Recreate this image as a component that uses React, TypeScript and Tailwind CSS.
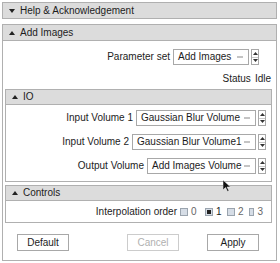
import React from "react";

const Arrow = ({ up }: { up?: boolean }) => (
  <svg width="6" height="4" viewBox="0 0 6 4" className="shrink-0">
    {up ? <path d="M0 4 L3 0 L6 4 Z" fill="#222" /> : <path d="M0 0 L6 0 L3 4 Z" fill="#222" />}
  </svg>
);

const Spinner = () => (
  <div className="flex flex-col w-[8px] h-[16px] border border-[#a8a8a8] bg-white ml-[2px]">
    <div className="flex-1 flex items-center justify-center border-b border-[#c8c8c8]">
      <svg width="5" height="3" viewBox="0 0 5 3">
        <path d="M0 3 L2.5 0 L5 3 Z" fill="#333" />
      </svg>
    </div>
    <div className="flex-1 flex items-center justify-center">
      <svg width="5" height="3" viewBox="0 0 5 3">
        <path d="M0 0 L5 0 L2.5 3 Z" fill="#333" />
      </svg>
    </div>
  </div>
);

const Combo = ({ text, width }: { text: string; width: string }) => (
  <div className="flex items-center">
    <div className={`${width} h-[16px] border border-[#a8a8a8] bg-white flex items-center pl-[4px] pr-[5px]`}>
      <span className="flex-1 whitespace-nowrap">{text}</span>
      <span className="w-[6px] h-[2px] bg-[#c4c4c4]" />
    </div>
    <Spinner />
  </div>
);

const Header = ({ title, up, h }: { title: string; up?: boolean; h: string }) => (
  <div className={`flex items-center ${h} bg-[#dcdcdc] pl-[6px] gap-[5px]`}>
    <Arrow up={up} />
    <span>{title}</span>
  </div>
);

const Check = ({ label, on, w }: { label: string; on?: boolean; w: string }) => (
  <div className={`flex items-center gap-[3px] ${w}`}>
    <div className="w-[8px] h-[8px] border border-[#9aa4ae] bg-[#d6dde6] flex items-center justify-center">
      {on && <div className="w-[4px] h-[4px] bg-[#222]" />}
    </div>
    <span className={on ? "" : "text-[#666]"}>{label}</span>
  </div>
);

export default function App() {
  return (
    <div
      className="relative w-[280px] h-[263px] bg-white text-[10px] leading-none text-[#1c1c1c] pt-[2px] pl-[2px] pr-[3px] pb-[2px] flex flex-col"
      style={{ fontFamily: '"Liberation Sans", Arial, sans-serif' }}
    >
      <div className="border border-[#b0b0b0]">
        <Header title="Help & Acknowledgement" h="h-[15px]" />
      </div>

      <div className="mt-[5px] border border-[#b0b0b0] flex-1 flex flex-col">
        <div className="border-b border-[#b0b0b0]">
          <Header title="Add Images" up h="h-[15px]" />
        </div>

        <div className="flex flex-col pl-[2px] pr-[4px]">
          <div className="flex items-center justify-end gap-[3px] mt-[8px] pr-[13px]">
            <span>Parameter set</span>
            <Combo text="Add Images" width="w-[76px]" />
          </div>
          <div className="flex justify-end gap-[4px] mt-[9px] pr-[1px]">
            <span>Status</span>
            <span>Idle</span>
          </div>

          <div className="mt-[5px] border border-[#b0b0b0] flex flex-col pb-[7px]">
            <div className="border-b border-[#b0b0b0]">
              <Header title="IO" up h="h-[14px]" />
            </div>
            <div className="flex flex-col gap-[8px] pt-[5px] pr-[5px]">
              <div className="flex items-center justify-end gap-[3px]">
                <span>Input Volume 1</span>
                <Combo text="Gaussian Blur Volume" width="w-[120px]" />
              </div>
              <div className="flex items-center justify-end gap-[3px]">
                <span>Input Volume 2</span>
                <Combo text="Gaussian Blur Volume1" width="w-[124px]" />
              </div>
              <div className="flex items-center justify-end gap-[3px]">
                <span>Output Volume</span>
                <Combo text="Add Images Volume" width="w-[109px]" />
              </div>
            </div>
          </div>

          <div className="mt-[3px] border border-[#b0b0b0] flex flex-col h-[38px]">
            <div className="border-b border-[#b0b0b0]">
              <Header title="Controls" up h="h-[14px]" />
            </div>
            <div className="flex items-center justify-end flex-1 pr-[8px]">
              <span className="mr-[3px]">Interpolation order</span>
              <div className="flex items-center">
                <Check label="0" w="w-[25px]" />
                <Check label="1" on w="w-[22px]" />
                <Check label="2" w="w-[22px]" />
                <Check label="3" w="w-[14px]" />
              </div>
            </div>
          </div>

          <div className="flex items-center mt-[11px] h-[17px]">
            <div className="ml-[12px] w-[52px] h-full border border-[#a8a8a8] flex items-center justify-center">Default</div>
            <div className="ml-[58px] w-[52px] h-full border border-[#cccccc] text-[#b0b0b0] flex items-center justify-center">Cancel</div>
            <div className="ml-[28px] w-[52px] h-full border border-[#a8a8a8] flex items-center justify-center">Apply</div>
          </div>
        </div>
      </div>

      <svg className="absolute left-[223px] top-[180px]" width="8" height="12" viewBox="0 0 8 12">
        <path d="M0 0 L0 10 L2.5 7.5 L4.5 11.5 L6 10.8 L4 7 L7.5 7 Z" fill="#111" stroke="#fff" strokeWidth="0.5" />
      </svg>
    </div>
  );
}
